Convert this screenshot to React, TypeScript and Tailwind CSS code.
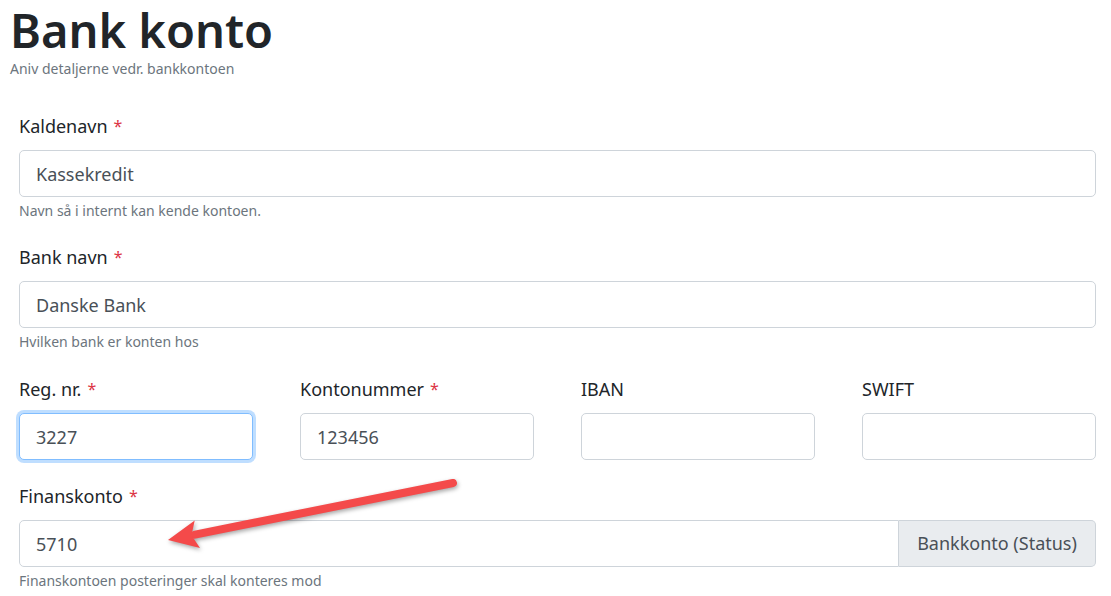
import React from 'react';

const font = { fontFamily: '"Noto Sans", "Open Sans", sans-serif' };

function Label({ text, required }: { text: string; required?: boolean }) {
  return (
    <label className="block text-[18px] leading-[27px] text-[#212529] mb-[10px]">
      {text}
      {required && <span className="text-[#dc3545] text-[16px] ml-[6px] align-top">*</span>}
    </label>
  );
}

function Input({ value, focus }: { value?: string; focus?: boolean }) {
  const base =
    'w-full h-[47px] px-4 rounded-[5px] bg-white text-[18px] text-[#495057] outline-none border';
  return (
    <input
      readOnly
      value={value ?? ''}
      className={
        focus
          ? base + ' border-[#80bdff] shadow-[0_0_0_3px_rgba(0,123,255,0.25)]'
          : base + ' border-[#ced4da]'
      }
    />
  );
}

function Help({ text }: { text: string }) {
  return <small className="block mt-[3px] text-[14px] leading-[21px] text-[#6c757d]">{text}</small>;
}

export default function App() {
  return (
    <div className="relative w-[1111px] h-[596px] overflow-hidden bg-white" style={font}>
      {/* Header */}
      <div className="px-[10px]">
        <h1 className="text-[47px] font-semibold leading-[60px] text-[#212529]">Bank konto</h1>
        <p className="text-[14px] leading-[18px] text-[#6c757d]">Aniv detaljerne vedr. bankkontoen</p>
      </div>

      {/* Form */}
      <form className="pl-[19px] pr-[15px] mt-[35px]">
        <div className="mb-[23px]">
          <Label text="Kaldenavn" required />
          <Input value="Kassekredit" />
          <Help text="Navn så i internt kan kende kontoen." />
        </div>

        <div className="mb-[24px]">
          <Label text="Bank navn" required />
          <Input value="Danske Bank" />
          <Help text="Hvilken bank er konten hos" />
        </div>

        <div className="grid grid-cols-4 gap-x-[47px] mb-[23px]">
          <div>
            <Label text="Reg. nr." required />
            <Input value="3227" focus />
          </div>
          <div>
            <Label text="Kontonummer" required />
            <Input value="123456" />
          </div>
          <div>
            <Label text="IBAN" />
            <Input />
          </div>
          <div>
            <Label text="SWIFT" />
            <Input />
          </div>
        </div>

        <div>
          <Label text="Finanskonto" required />
          <div className="flex h-[47px]">
            <input
              readOnly
              value="5710"
              className="flex-1 min-w-0 h-full px-4 rounded-l-[5px] border border-[#ced4da] bg-white text-[18px] text-[#495057] outline-none"
            />
            <span className="flex items-center justify-center h-full w-[197px] rounded-r-[5px] border border-l-0 border-[#ced4da] bg-[#e9ecef] text-[18px] text-[#495057]">
              Bankkonto (Status)
            </span>
          </div>
          <Help text="Finanskontoen posteringer skal konteres mod" />
        </div>
      </form>

      {/* Annotation arrow */}
      <svg
        className="absolute left-0 top-0 pointer-events-none"
        width="1111"
        height="596"
        style={{ filter: 'drop-shadow(1px 2px 2px rgba(0,0,0,0.35))' }}
      >
        <line x1="195" y1="534.6" x2="453" y2="483" stroke="#f44a4a" strokeWidth="8" strokeLinecap="round" />
        <polygon points="168,540 194.7,520.4 191.5,535.3 200,548" fill="#f44a4a" />
      </svg>
    </div>
  );
}
